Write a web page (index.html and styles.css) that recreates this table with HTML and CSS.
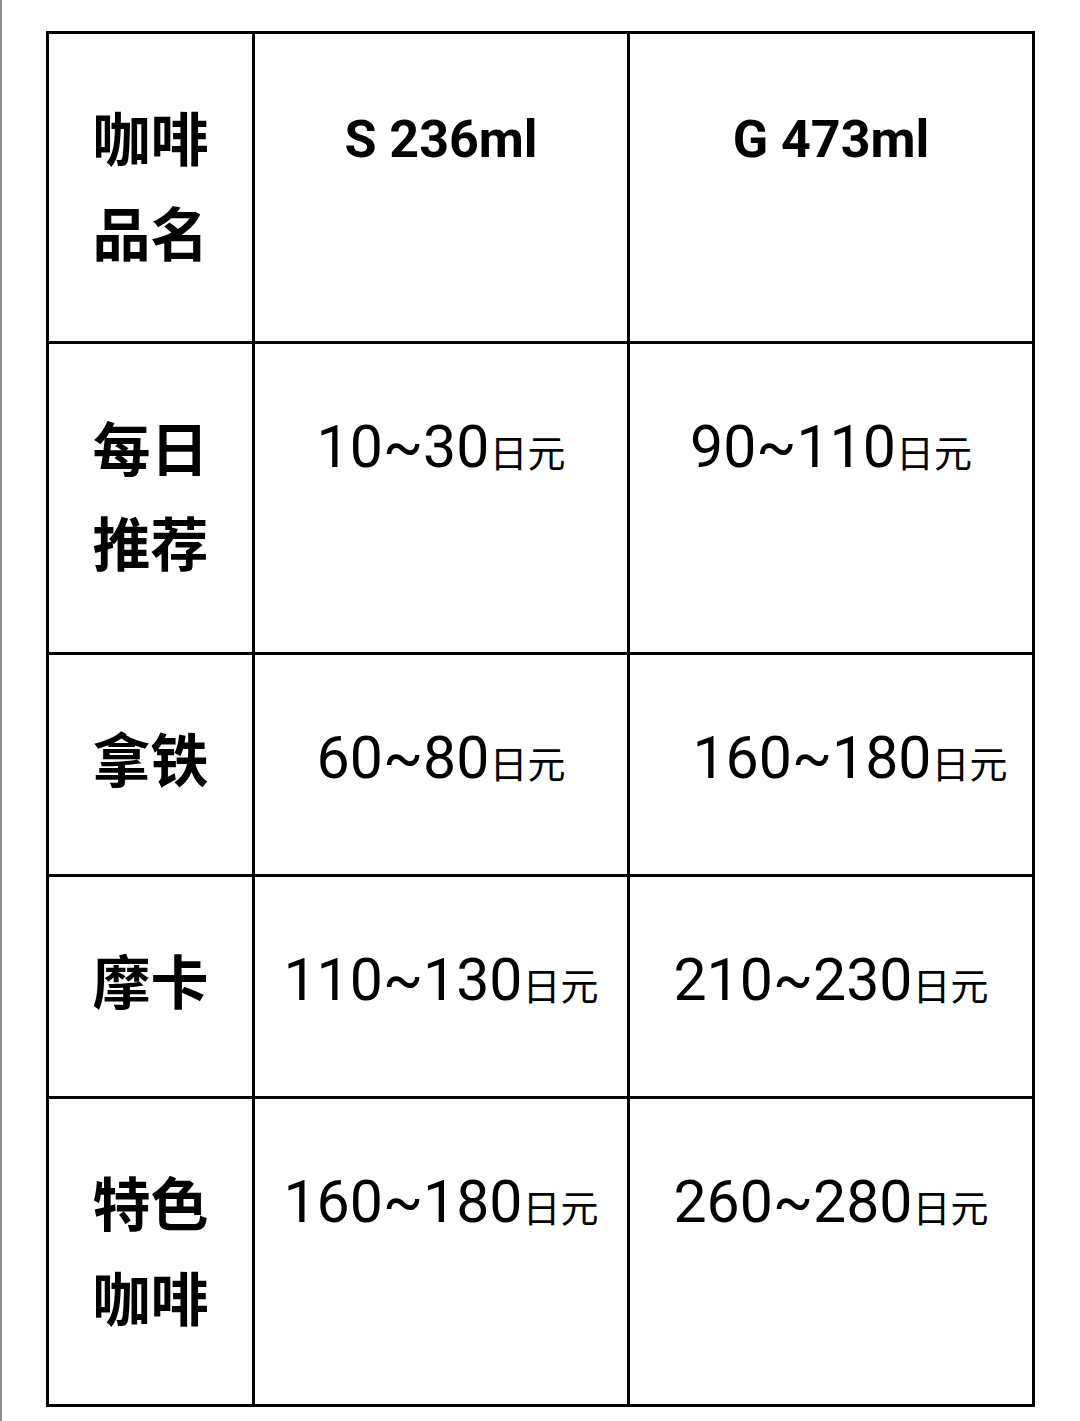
FILE: index.html
```html
<!DOCTYPE html>
<html lang="zh">
<head>
<meta charset="utf-8">
<link rel="stylesheet" href="styles.css">
</head>
<body>
<div class="frame">
  <table class="price">
    <tr class="r1">
      <td class="name">咖啡<br>品名</td>
      <td class="size">S 236ml</td>
      <td class="size">G 473ml</td>
    </tr>
    <tr class="r2">
      <td class="name">每日<br>推荐</td>
      <td class="num">10~30<span class="yen">日元</span></td>
      <td class="num">90~110<span class="yen">日元</span></td>
    </tr>
    <tr class="r3">
      <td class="name">拿铁</td>
      <td class="num">60~80<span class="yen">日元</span></td>
      <td class="num shift">160~180<span class="yen">日元</span></td>
    </tr>
    <tr class="r4">
      <td class="name">摩卡</td>
      <td class="num">110~130<span class="yen">日元</span></td>
      <td class="num">210~230<span class="yen">日元</span></td>
    </tr>
    <tr class="r5">
      <td class="name">特色<br>咖啡</td>
      <td class="num">160~180<span class="yen">日元</span></td>
      <td class="num">260~280<span class="yen">日元</span></td>
    </tr>
  </table>
</div>
</body>
</html>
```
FILE: styles.css
```css
html, body {
  margin: 0;
  padding: 0;
  background: #ffffff;
}

.frame {
  border-left: 2px solid #8e8e8e;
  min-height: 1421px;
  box-sizing: border-box;
  padding: 31px 0 0 44px;
}

.price {
  border-collapse: separate;
  border-spacing: 0;
  table-layout: fixed;
  width: 989px;
  border-left: 3px solid #000;
  border-top: 3px solid #000;
  color: #000;
}

.price td {
  box-sizing: border-box;
  border-right: 3px solid #000;
  border-bottom: 3px solid #000;
  padding: 55px 0 0 0;
  vertical-align: top;
  text-align: center;
  line-height: 95px;
  white-space: nowrap;
}

.price td:nth-child(1) { width: 206px; }
.price td:nth-child(2) { width: 375px; }
.price td:nth-child(3) { width: 405px; }

.r1 td { height: 310px; }
.r2 td { height: 311px; }
.r3 td { height: 222px; }
.r4 td { height: 222px; }
.r5 td { height: 308px; }

.name {
  font-family: "Noto Sans CJK SC", "Noto Sans", sans-serif;
  font-weight: 700;
  font-size: 58px;
}

.price td.size {
  font-family: Roboto, "Noto Sans CJK SC", sans-serif;
  font-weight: 700;
  font-size: 52px;
  padding-top: 58px;
}

.num {
  font-family: Roboto, "Noto Sans CJK SC", sans-serif;
  font-weight: 400;
  font-size: 59px;
}

.price td.shift {
  padding-left: 38px;
}

.yen {
  font-family: "Noto Sans CJK SC", sans-serif;
  font-size: 38px;
  font-weight: 400;
}
```
